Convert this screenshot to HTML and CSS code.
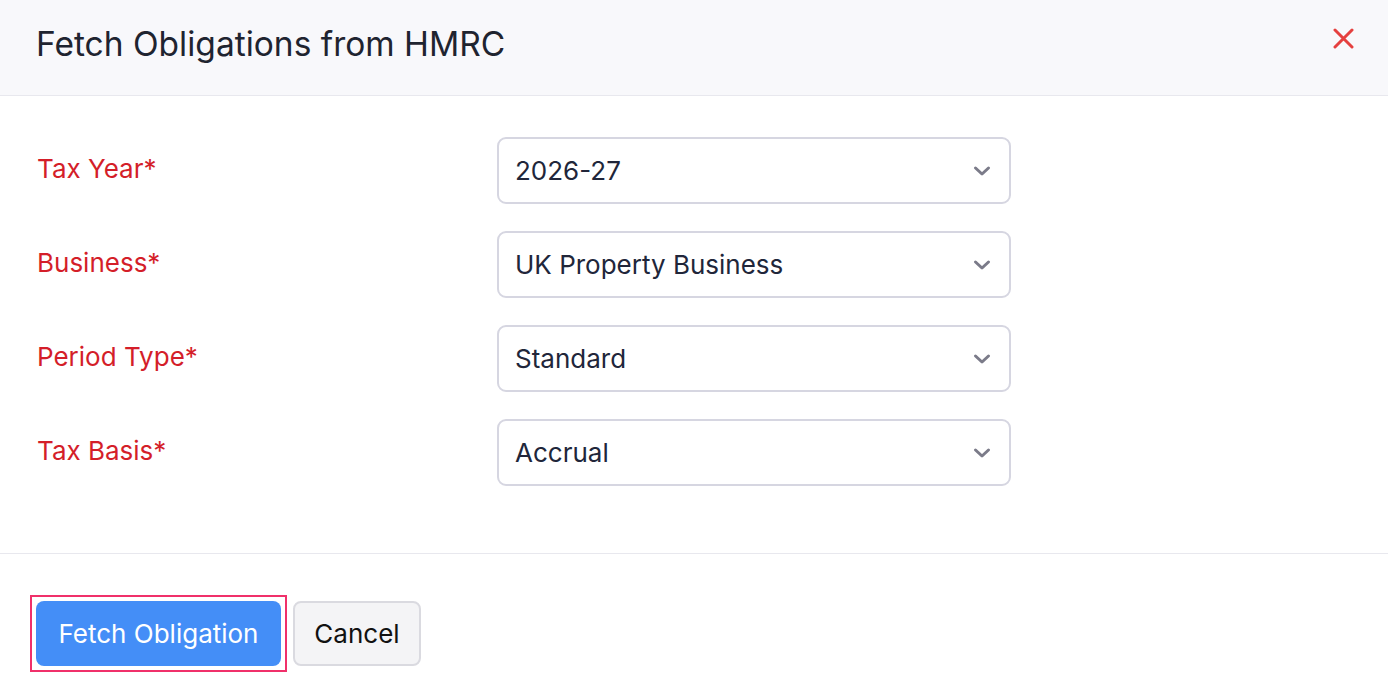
FILE: index.html
```html
<!DOCTYPE html>
<html lang="en">
<head>
<meta charset="utf-8">
<title>Fetch Obligations from HMRC</title>
<link rel="stylesheet" href="styles.css">
</head>
<body>
<div class="modal">
  <header class="modal-header">
    <h1 class="modal-title">Fetch Obligations from HMRC</h1>
    <button class="close-btn" aria-label="Close">
      <svg width="21" height="21" viewBox="0 0 21 21"><path d="M2 2 L19 19 M19 2 L2 19" stroke="#e5403f" stroke-width="3" stroke-linecap="round" fill="none"/></svg>
    </button>
  </header>
  <div class="modal-body">
    <div class="form-row">
      <label class="form-label">Tax Year*</label>
      <div class="select"><span class="select-value">2026-27</span><svg class="chev" width="18" height="12" viewBox="0 0 18 12"><path d="M2.5 3 L9 9 L15.5 3" stroke="#7b7b89" stroke-width="3" fill="none" stroke-linecap="round" stroke-linejoin="round"/></svg></div>
    </div>
    <div class="form-row">
      <label class="form-label">Business*</label>
      <div class="select"><span class="select-value">UK Property Business</span><svg class="chev" width="18" height="12" viewBox="0 0 18 12"><path d="M2.5 3 L9 9 L15.5 3" stroke="#7b7b89" stroke-width="3" fill="none" stroke-linecap="round" stroke-linejoin="round"/></svg></div>
    </div>
    <div class="form-row">
      <label class="form-label">Period Type*</label>
      <div class="select"><span class="select-value">Standard</span><svg class="chev" width="18" height="12" viewBox="0 0 18 12"><path d="M2.5 3 L9 9 L15.5 3" stroke="#7b7b89" stroke-width="3" fill="none" stroke-linecap="round" stroke-linejoin="round"/></svg></div>
    </div>
    <div class="form-row">
      <label class="form-label">Tax Basis*</label>
      <div class="select"><span class="select-value">Accrual</span><svg class="chev" width="18" height="12" viewBox="0 0 18 12"><path d="M2.5 3 L9 9 L15.5 3" stroke="#7b7b89" stroke-width="3" fill="none" stroke-linecap="round" stroke-linejoin="round"/></svg></div>
    </div>
  </div>
  <footer class="modal-footer">
    <span class="focus-ring"><button class="btn btn-primary">Fetch Obligation</button></span>
    <button class="btn btn-secondary">Cancel</button>
  </footer>
</div>
</body>
</html>
```

FILE: styles.css
```css
* { box-sizing: border-box; }
html, body { margin: 0; padding: 0; background: #ffffff; }
body { font-family: Inter, "Noto Sans", sans-serif; color: #21263a; }

.modal { width: 1388px; height: 700px; background: #fff; }

.modal-header {
  height: 96px;
  background: #f8f8fb;
  border-bottom: 1px solid #e8e8ee;
  display: flex;
  align-items: center;
  justify-content: space-between;
  padding: 0 34px 0 36px;
}
.modal-title {
  margin: 0 0 8px 0;
  font-size: 33.5px;
  font-weight: 400;
  color: #1f2430;
}
.close-btn {
  border: 0;
  background: none;
  padding: 0;
  width: 21px;
  height: 21px;
  display: flex;
  margin-top: -18px;
}

.modal-body {
  padding: 41px 37px 67px 37px;
  display: flex;
  flex-direction: column;
  gap: 27px;
  border-bottom: 1px solid #e8e8ee;
}
.form-row {
  display: flex;
  align-items: center;
  height: 67px;
}
.form-label {
  width: 460px;
  font-size: 26px;
  color: #d41e29;
  margin-top: -4px;
}
.select {
  width: 514px;
  height: 67px;
  border: 2px solid #d6d6e1;
  border-radius: 9px;
  display: flex;
  align-items: center;
  justify-content: space-between;
  padding: 0 18px 0 16px;
  background: #fff;
}
.select-value { font-size: 26px; color: #21263a; }
.chev { display: block; }

.modal-footer {
  padding: 41px 30px;
  display: flex;
  align-items: center;
  gap: 6px;
}
.focus-ring {
  display: inline-flex;
  padding: 4px;
  border: 2px solid #f0306a;
}
.btn {
  font-family: Inter, "Noto Sans", sans-serif;
  font-size: 26px;
  height: 65px;
  border-radius: 8px;
  cursor: pointer;
}
.btn-primary {
  width: 245px;
  background: #448ef7;
  border: 0;
  color: #fff;
}
.btn-secondary {
  width: 128px;
  background: #f4f4f6;
  border: 2px solid #dadae0;
  color: #111;
}
```
